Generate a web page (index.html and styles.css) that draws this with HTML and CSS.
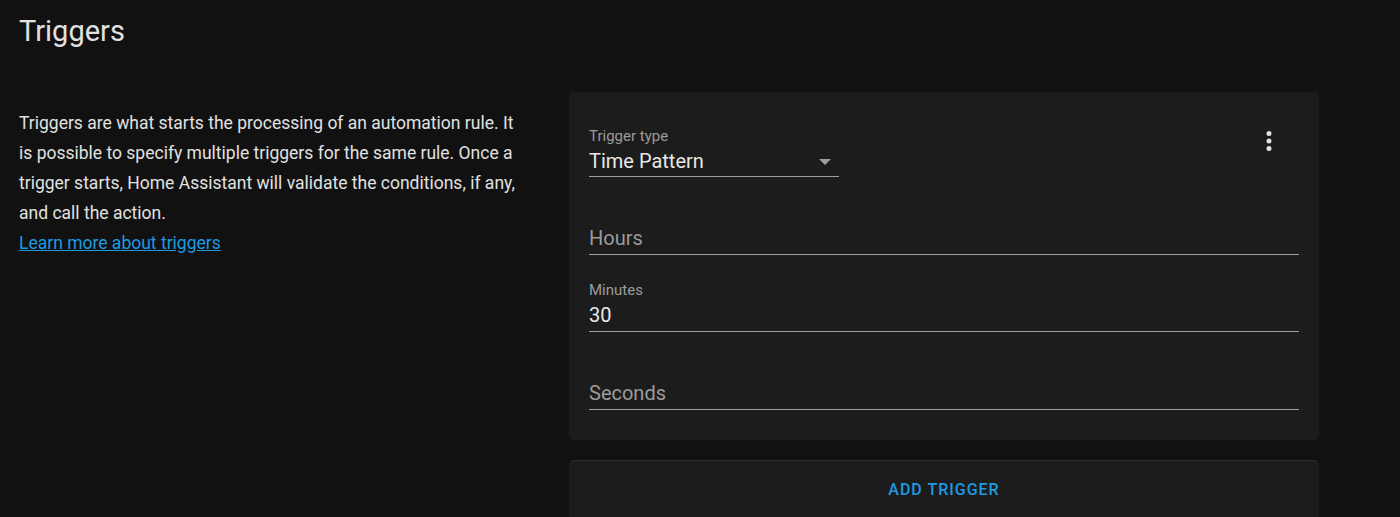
FILE: index.html
```html
<!DOCTYPE html>
<html lang="en">
<head>
<meta charset="utf-8">
<title>Triggers</title>
<link rel="stylesheet" href="styles.css">
</head>
<body>
<div class="page">
  <h1 class="title">Triggers</h1>
  <div class="section">
    <div class="intro">
      <p class="intro-text">Triggers are what starts the processing of an automation rule. It is possible to specify multiple triggers for the same rule. Once a trigger starts, Home Assistant will validate the conditions, if any, and call the action.</p>
      <a class="learn" href="#">Learn more about triggers</a>
    </div>
    <div class="content">
      <div class="card trigger-card">
        <div class="card-head">
          <div class="field select">
            <span class="label">Trigger type</span>
            <div class="value-row">
              <span class="value">Time Pattern</span>
              <svg class="arrow" width="12" height="6" viewBox="0 0 12 6"><polygon points="0,0 12,0 6,6" fill="#9e9e9e"/></svg>
            </div>
          </div>
          <button class="menu-btn" aria-label="menu">
            <svg width="30" height="30" viewBox="0 0 24 24"><path fill="#e1e1e1" d="M12,16A2,2 0 0,1 14,18A2,2 0 0,1 12,20A2,2 0 0,1 10,18A2,2 0 0,1 12,16M12,10A2,2 0 0,1 14,12A2,2 0 0,1 12,14A2,2 0 0,1 10,12A2,2 0 0,1 12,10M12,4A2,2 0 0,1 14,6A2,2 0 0,1 12,8A2,2 0 0,1 10,6A2,2 0 0,1 12,4Z"/></svg>
          </button>
        </div>
        <div class="field">
          <span class="placeholder">Hours</span>
        </div>
        <div class="field">
          <span class="label">Minutes</span>
          <span class="value">30</span>
        </div>
        <div class="field">
          <span class="placeholder">Seconds</span>
        </div>
      </div>
      <div class="card add-card">
        <button class="add-btn">ADD TRIGGER</button>
      </div>
    </div>
  </div>
</div>
</body>
</html>
```

FILE: styles.css
```css
html, body {
  margin: 0;
  padding: 0;
  background: #111111;
  height: 100%;
  overflow: hidden;
}

body {
  font-family: Roboto, "Noto Sans", sans-serif;
  color: #e1e1e1;
}

.page {
  padding: 11px 19px 0 19px;
  width: 1300px;
}

.title {
  margin: 0;
  font-size: 29px;
  line-height: 40px;
  font-weight: 400;
  color: #e1e1e1;
}

.section {
  display: flex;
  margin-top: 41px;
}

.intro {
  width: 500px;
  flex: 0 0 500px;
  margin-right: 50px;
  padding-top: 16px;
  font-size: 17.5px;
  line-height: 30px;
  color: #e1e1e1;
}

.intro-text {
  margin: 0;
}

.learn {
  color: #1e9ae0;
  text-decoration: underline;
}

.content {
  width: 750px;
  flex: 0 0 750px;
  display: flex;
  flex-direction: column;
  gap: 20px;
}

.card {
  background: #1c1c1c;
  border-radius: 5px;
}

.trigger-card {
  padding: 15px 20px 30px 20px;
  display: flex;
  flex-direction: column;
  gap: 7.67px;
}

.card-head {
  display: flex;
  justify-content: space-between;
  align-items: flex-start;
}

.field {
  box-sizing: border-box;
  height: 70px;
  display: flex;
  flex-direction: column;
  justify-content: flex-end;
  padding-bottom: 4px;
  border-bottom: 1px solid #9e9e9e;
}

.field.select {
  width: 250px;
  padding-bottom: 3px;
}

.label {
  font-size: 15px;
  line-height: 18px;
  color: #9b9b9b;
  margin-bottom: 4px;
}

.value {
  font-size: 20px;
  line-height: 24px;
  color: #e8e8e8;
}

.placeholder {
  font-size: 20px;
  line-height: 24px;
  color: #9b9b9b;
}

.value-row {
  display: flex;
  align-items: center;
  justify-content: space-between;
  padding-right: 8px;
}

.arrow {
  display: block;
  margin-top: 1px;
}

.menu-btn {
  width: 60px;
  height: 60px;
  margin-top: 4px;
  padding: 0;
  border: 0;
  background: transparent;
  display: flex;
  align-items: center;
  justify-content: center;
}

.menu-btn svg {
  display: block;
}

.add-card {
  border-top: 1px solid #2e2e2e;
  border-radius: 5px 5px 0 0;
  padding: 19px 0 30px 0;
  display: flex;
  justify-content: center;
}

.add-btn {
  border: 0;
  background: transparent;
  padding: 0;
  font-family: Roboto, "Noto Sans", sans-serif;
  font-size: 16px;
  line-height: 20px;
  font-weight: 500;
  letter-spacing: 1px;
  color: #1e9ae0;
}
```
